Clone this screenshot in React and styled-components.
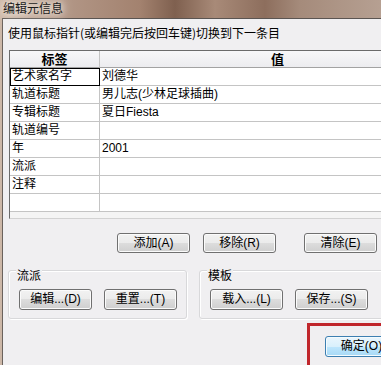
import { Fragment } from 'react'
import styled, { createGlobalStyle } from 'styled-components'

const GlobalStyle = createGlobalStyle`
  html, body {
    margin: 0;
    padding: 0;
    overflow: hidden;
    background: #a88c7c;
  }
  body {
    font-family: "Liberation Sans", "Noto Sans CJK SC", sans-serif;
    font-size: 12px;
    color: #000;
  }
`

const Window = styled.div`
  width: 381px;
  height: 365px;
  overflow: hidden;
  background: linear-gradient(90deg, #cdb8a8 0px, #b39888 60px, #a3826f 140px, #7f604f 175px, #a88a78 215px, #8d6e5d 265px, #a58b7b 300px, #b6a092 381px);
`

const TitleBar = styled.div`
  height: 18px;
  display: flex;
  align-items: flex-start;
  padding-left: 3px;
`

const Title = styled.span`
  font-family: "Noto Sans CJK SC", sans-serif;
  font-size: 12px;
  line-height: 15px;
  color: #1b1b1b;
  text-shadow: 0 0 6px #f4ece4, 0 0 10px #f4ece4, 0 0 14px #efe4da;
`

const Body = styled.div`
  margin-left: 2px;
  width: 470px;
  height: 347px;
  box-sizing: border-box;
  background: #f0eff1;
  border-top: 1px solid #5b5552;
  border-left: 1px solid #6a625d;
  padding: 6px 0 0 6px;
`

const Hint = styled.div`
  font-family: "Noto Sans CJK SC", sans-serif;
  line-height: 16px;
  margin-left: -1px;
  height: 16px;
`

const ListView = styled.div`
  margin-top: 9px;
  width: 447px;
  background: #f4f4f4;
  border-top: 1px solid #6b6b6b;
  border-left: 1px solid #6b6b6b;
  border-bottom: 1px solid #d2d2d2;
  padding-bottom: 6px;
`

const Grid = styled.div`
  display: grid;
  grid-template-columns: 90px 356px;
  background: #fff;
`

const HeadCell = styled.div`
  height: 17px;
  box-sizing: border-box;
  background: linear-gradient(#f7f7f9, #ececef);
  border-right: 1px solid #c4c4c4;
  border-bottom: 1px solid #a2a2a2;
  text-align: center;
  font-family: "Noto Sans CJK SC", sans-serif;
  font-size: 13px;
  font-weight: bold;
  line-height: 16px;
`

const Cell = styled.div`
  height: 18px;
  box-sizing: border-box;
  padding: 0 2px;
  border-right: 1px solid ${p => (p.$selected ? '#000' : '#c4c4c4')};
  border-bottom: 1px solid ${p => (p.$selected ? '#000' : '#c4c4c4')};
  box-shadow: ${p => (p.$selected ? 'inset 1px 1px 0 #000' : 'none')};
  line-height: 17px;
  white-space: nowrap;
  overflow: hidden;
`

const ButtonRow = styled.div`
  display: flex;
  margin-top: 14px;
  padding-left: 108px;
  gap: 13px;
`

const Button = styled.button`
  width: 73px;
  height: ${p => p.$h || 21}px;
  margin-left: ${p => p.$ml || 0}px;
  padding: 0;
  box-sizing: border-box;
  border: 1px solid ${p => (p.$primary ? '#3c7fb1' : '#707070')};
  border-radius: 3px;
  background: ${p =>
    p.$primary
      ? 'linear-gradient(#eaf6fd 0%, #d9f0fc 50%, #bee6fd 50%, #a7d9f5 100%)'
      : 'linear-gradient(#f2f2f2 0%, #ebebeb 50%, #dddddd 50%, #cfcfcf 100%)'};
  box-shadow: inset 0 0 0 1px ${p => (p.$primary ? '#f4fbfe' : '#fbfbfb')};
  font-family: "Liberation Sans", "Noto Sans CJK SC", sans-serif;
  font-size: 12px;
  line-height: 17px;
  color: #000;
  flex-shrink: 0;
`

const GroupRow = styled.div`
  display: flex;
  gap: 12px;
  margin-top: 17px;
  margin-left: -1px;
`

const GroupBox = styled.div`
  position: relative;
  width: ${p => p.$w}px;
  height: 49px;
  box-sizing: border-box;
  border: 1px solid #d8d8da;
  border-radius: 3px;
  box-shadow: inset 1px 1px 0 #fff, 1px 1px 0 #fff;
  display: flex;
  gap: 12px;
  padding: 18px 0 0 10px;
`

const GroupLabel = styled.span`
  position: absolute;
  top: -3px;
  left: 7px;
  padding: 0 1px;
  background: #f0eff1;
  font-family: "Noto Sans CJK SC", sans-serif;
  line-height: 14px;
`

const Footer = styled.div`
  margin-top: 4px;
  padding-left: 298px;
`

const Highlight = styled.div`
  width: 120px;
  height: 46px;
  box-sizing: border-box;
  border: 3px solid #c0262c;
  padding: 10px 0 0 15px;
`

const rows = [
  ['艺术家名字', '刘德华'],
  ['轨道标题', '男儿志(少林足球插曲)'],
  ['专辑标题', '夏日Fiesta'],
  ['轨道编号', ''],
  ['年', '2001'],
  ['流派', ''],
  ['注释', ''],
  ['', ''],
]

export default function App() {
  return (
    <>
      <GlobalStyle />
      <Window>
        <TitleBar>
          <Title>编辑元信息</Title>
        </TitleBar>
        <Body>
          <Hint>使用鼠标指针(或编辑完后按回车键)切换到下一条目</Hint>
          <ListView>
            <Grid>
              <HeadCell>标签</HeadCell>
              <HeadCell>值</HeadCell>
              {rows.map(([label, value], i) => (
                <Fragment key={i}>
                  <Cell $selected={i === 0}>{label}</Cell>
                  <Cell>{value}</Cell>
                </Fragment>
              ))}
            </Grid>
          </ListView>
          <ButtonRow>
            <Button $h={20}>添加(A)</Button>
            <Button $h={20}>移除(R)</Button>
            <Button $h={20} $ml={15}>清除(E)</Button>
          </ButtonRow>
          <GroupRow>
            <GroupBox $w={179}>
              <GroupLabel>流派</GroupLabel>
              <Button>编辑...(D)</Button>
              <Button>重置...(T)</Button>
            </GroupBox>
            <GroupBox $w={200}>
              <GroupLabel>模板</GroupLabel>
              <Button>载入...(L)</Button>
              <Button>保存...(S)</Button>
            </GroupBox>
          </GroupRow>
          <Footer>
            <Highlight>
              <Button $primary>确定(O)</Button>
            </Highlight>
          </Footer>
        </Body>
      </Window>
    </>
  )
}
